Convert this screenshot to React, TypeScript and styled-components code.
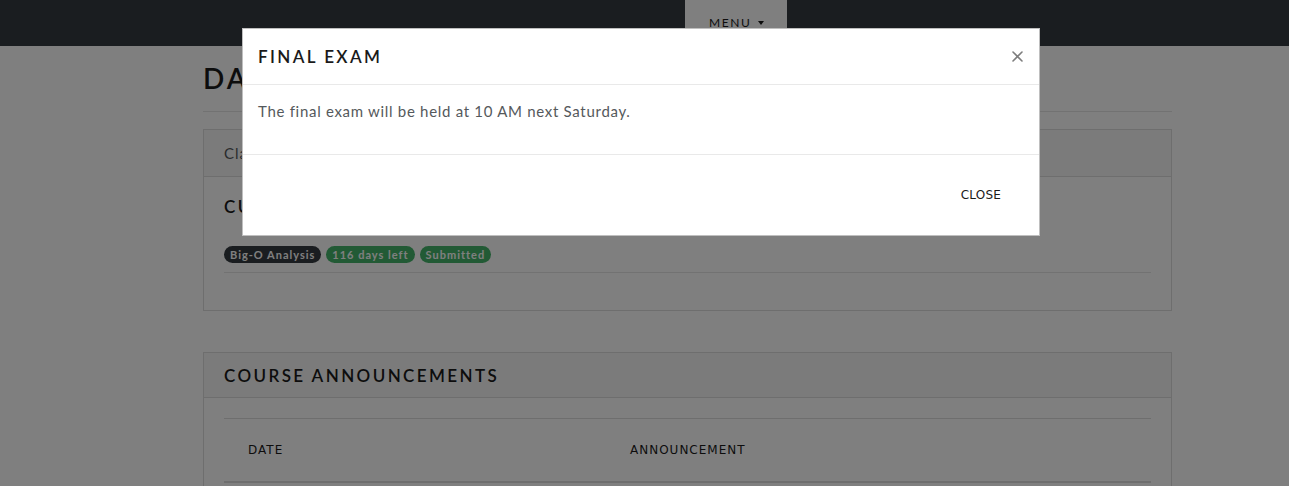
import React from "react";
import styled, { createGlobalStyle } from "styled-components";

const Global = createGlobalStyle`
  html, body { margin: 0; padding: 0; background: #fff; }
  body { font-family: "Lato", "Noto Sans", sans-serif; color: #55595c; overflow: hidden; }
  * { box-sizing: border-box; }
`;

const Navbar = styled.nav`
  height: 46px;
  background: #343a40;
  display: flex;
  align-items: stretch;
  padding-left: 685px;
`;

const MenuButton = styled.div`
  width: 102px;
  background: #ffffff;
  display: flex;
  align-items: flex-end;
  padding: 0 0 16px 24px;
  font-family: "Lato", sans-serif;
  font-size: 12px;
  letter-spacing: 1.6px;
  color: #1a1a1a;
  gap: 7px;
`;

const Caret = styled.span`
  width: 0;
  height: 0;
  border-left: 3.5px solid transparent;
  border-right: 3.5px solid transparent;
  border-top: 4px solid #1a1a1a;
  margin-bottom: 5px;
`;

const Container = styled.main`
  margin-left: 203px;
  width: 969px;
  padding-top: 15px;
`;

const PageTitle = styled.h1`
  margin: 0;
  font-size: 28px;
  line-height: 34px;
  font-weight: 600;
  letter-spacing: 3px;
  text-transform: uppercase;
  color: #1a1a1a;
`;

const Rule = styled.hr<{ $inset?: boolean }>`
  border: 0;
  border-top: 1px solid #e4e4e4;
  margin: ${(p) => (p.$inset ? "9px 0 0" : "16px 0 17px")};
`;

const Card = styled.section<{ $gap?: number }>`
  border: 1px solid #dddddd;
  margin-bottom: ${(p) => p.$gap ?? 0}px;
`;

const CardHeader = styled.header<{ $heading?: boolean }>`
  height: ${(p) => (p.$heading ? "45px" : "47px")};
  background: #f7f7f7;
  border-bottom: 1px solid #dddddd;
  display: flex;
  align-items: center;
  padding: 0 20px;
  font-size: ${(p) => (p.$heading ? "17px" : "15px")};
  font-weight: ${(p) => (p.$heading ? 600 : 400)};
  letter-spacing: ${(p) => (p.$heading ? "2.4px" : "1px")};
  text-transform: ${(p) => (p.$heading ? "uppercase" : "none")};
  color: ${(p) => (p.$heading ? "#1a1a1a" : "#55595c")};
`;

const CardBody = styled.div`
  padding: 20px 20px 37px;
`;

const SectionTitle = styled.h5`
  margin: 0 0 29px;
  font-size: 17px;
  line-height: 20px;
  font-weight: 600;
  letter-spacing: 2.4px;
  text-transform: uppercase;
  color: #1a1a1a;
`;

const BadgeRow = styled.div`
  display: flex;
  gap: 5px;
`;

const Badge = styled.span<{ $tone: "dark" | "success" }>`
  display: inline-flex;
  align-items: center;
  height: 17px;
  padding: 0 6px;
  border-radius: 9px;
  font-size: 11px;
  font-weight: 700;
  letter-spacing: 1px;
  color: #fff;
  background: ${(p) => (p.$tone === "dark" ? "#343a40" : "#45b56b")};
`;

const TableBody = styled.div`
  padding: 20px 20px 0;
`;

const Table = styled.div`
  border-top: 1px solid #dddddd;
  display: grid;
  grid-template-columns: 382px 1fr;
`;

const Th = styled.div`
  height: 64px;
  display: flex;
  align-items: center;
  padding-left: 24px;
  border-bottom: 2px solid #dddddd;
  font-family: "DejaVu Sans", sans-serif;
  font-size: 12px;
  letter-spacing: 1px;
  color: #1a1a1a;
`;

const Td = styled.div`
  height: 64px;
  display: flex;
  align-items: center;
  padding-left: 24px;
  border-bottom: 1px solid #dddddd;
  font-size: 14px;
`;

const Backdrop = styled.div`
  position: fixed;
  inset: 0;
  background: rgba(0, 0, 0, 0.5);
  padding: 28px 0 0 242px;
`;

const Modal = styled.div`
  width: 798px;
  background: #fff;
  border: 1px solid rgba(0, 0, 0, 0.25);
`;

const ModalHeader = styled.div`
  height: 56px;
  display: flex;
  align-items: center;
  justify-content: space-between;
  padding: 0 16px 0 15px;
  border-bottom: 1px solid #e9e9e9;
`;

const ModalTitle = styled.h5`
  margin: 0;
  font-size: 17px;
  font-weight: 600;
  letter-spacing: 2.4px;
  text-transform: uppercase;
  color: #1a1a1a;
`;

const CloseX = styled.button`
  border: 0;
  background: none;
  padding: 0;
  width: 12px;
  height: 12px;
  display: flex;
  align-items: center;
  justify-content: center;
`;

const ModalBody = styled.div`
  height: 70px;
  padding: 16px 15px 0;
  font-size: 15px;
  letter-spacing: 0.7px;
  line-height: 20px;
  color: #55595c;
  border-bottom: 1px solid #e9e9e9;
`;

const ModalFooter = styled.div`
  height: 80px;
  display: flex;
  align-items: center;
  justify-content: flex-end;
  padding: 0 14px;
`;

const FlatButton = styled.button`
  border: 0;
  background: transparent;
  padding: 12px 24px;
  font-family: "DejaVu Sans", sans-serif;
  font-size: 12px;
  letter-spacing: 0.2px;
  text-transform: uppercase;
  color: #1a1a1a;
`;

export default function App() {
  return (
    <>
      <Global />
      <Navbar>
        <MenuButton>
          MENU <Caret />
        </MenuButton>
      </Navbar>
      <Container>
        <PageTitle>Dashboard</PageTitle>
        <Rule />
        <Card $gap={41}>
          <CardHeader>Class: Data Structures &amp; Algorithms</CardHeader>
          <CardBody>
            <SectionTitle>Current Assignments</SectionTitle>
            <BadgeRow>
              <Badge $tone="dark">Big-O Analysis</Badge>
              <Badge $tone="success">116 days left</Badge>
              <Badge $tone="success">Submitted</Badge>
            </BadgeRow>
            <Rule $inset />
          </CardBody>
        </Card>
        <Card>
          <CardHeader $heading>Course Announcements</CardHeader>
          <TableBody>
            <Table>
              <Th>DATE</Th>
              <Th>ANNOUNCEMENT</Th>
              <Td>2024-01-10</Td>
              <Td>The final exam will be held at 10 AM next Saturday.</Td>
            </Table>
          </TableBody>
        </Card>
      </Container>
      <Backdrop>
        <Modal role="dialog">
          <ModalHeader>
            <ModalTitle>Final Exam</ModalTitle>
            <CloseX aria-label="Close">
              <svg width="11" height="11" viewBox="0 0 11 11">
                <path d="M1 1 L10 10 M10 1 L1 10" stroke="#7d7d7d" strokeWidth="1.6" strokeLinecap="round" />
              </svg>
            </CloseX>
          </ModalHeader>
          <ModalBody>The final exam will be held at 10 AM next Saturday.</ModalBody>
          <ModalFooter>
            <FlatButton>Close</FlatButton>
          </ModalFooter>
        </Modal>
      </Backdrop>
    </>
  );
}
